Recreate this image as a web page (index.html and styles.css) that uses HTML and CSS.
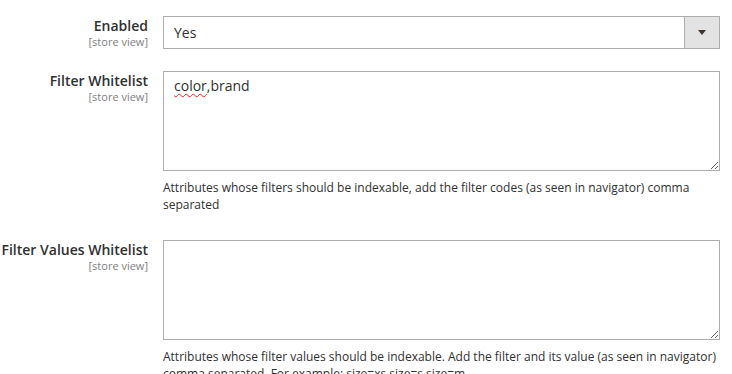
FILE: index.html
```html
<!DOCTYPE html>
<html lang="en">
<head>
  <meta charset="UTF-8" />
  <title>Layered Navigation Settings</title>
  <link rel="stylesheet" href="styles.css">
</head>
<body>

  <div class="fieldset">

    <div class="field">
      <div class="label">
        <span>Enabled</span>
        <span class="scope">[store view]</span>
      </div>
      <div class="control">
        <div class="select">
          <span class="select-value">Yes</span>
          <span class="select-arrow"></span>
        </div>
      </div>
    </div>

    <div class="field">
      <div class="label">
        <span>Filter Whitelist</span>
        <span class="scope">[store view]</span>
      </div>
      <div class="control">
        <div class="textarea-wrap">
          <textarea class="textarea" spellcheck="false">color,brand</textarea>
          <span class="misspelt">color</span>
        </div>
        <p class="note">Attributes whose filters should be indexable, add the filter codes (as seen in navigator) comma separated</p>
      </div>
    </div>

    <div class="field">
      <div class="label">
        <span>Filter Values Whitelist</span>
        <span class="scope">[store view]</span>
      </div>
      <div class="control">
        <div class="textarea-wrap">
          <textarea class="textarea" spellcheck="false"></textarea>
        </div>
        <p class="note">Attributes whose filter values should be indexable. Add the filter and its value (as seen in navigator) comma separated. For example: size=xs,size=s,size=m</p>
      </div>
    </div>

  </div>

</body>
</html>
```

FILE: styles.css
```css
* {
  box-sizing: border-box;
  margin: 0;
  padding: 0;
}
body {
  background: #fff;
  font-family: "Open Sans", Arial, sans-serif;
  color: #303030;
  font-size: 14px;
}
.fieldset {
  padding-top: 16px;
  width: 720px;
}
.field {
  display: grid;
  grid-template-columns: 148px 557px;
  column-gap: 15px;
  margin-bottom: 22px;
}
.label {
  display: flex;
  flex-direction: column;
  align-items: flex-end;
  text-align: right;
  font-weight: 600;
  font-size: 14px;
  line-height: 17px;
  padding-top: 1px;
}
.scope {
  font-weight: 400;
  font-size: 11px;
  line-height: 15px;
  color: #808080;
}
.select {
  display: flex;
  height: 33px;
  border: 1px solid #adadad;
  background: #fff;
}
.select-value {
  flex: 1;
  padding: 0 10px;
  line-height: 31px;
}
.select-arrow {
  width: 35px;
  border-left: 1px solid #adadad;
  background: #e3e3e3;
  position: relative;
}
.select-arrow::after {
  content: "";
  position: absolute;
  left: 13px;
  top: 13px;
  border-left: 4px solid transparent;
  border-right: 4px solid transparent;
  border-top: 5px solid #41362f;
}
.textarea-wrap {
  position: relative;
}
.textarea {
  display: block;
  width: 100%;
  height: 100px;
  border: 1px solid #adadad;
  border-radius: 0;
  padding: 4px 10px;
  font-family: "Open Sans", Arial, sans-serif;
  font-size: 14px;
  line-height: 20px;
  color: #303030;
  resize: vertical;
  outline: none;
}
.misspelt {
  position: absolute;
  left: 11px;
  top: 5px;
  font-size: 14px;
  line-height: 20px;
  color: transparent;
  text-decoration: underline wavy #e0251b;
  text-decoration-thickness: 1px;
  text-underline-offset: 2px;
  pointer-events: none;
}
.note {
  margin-top: 8px;
  padding-bottom: 5px;
  font-size: 12px;
  line-height: 17px;
  color: #303030;
  padding-right: 4px;
}
```
